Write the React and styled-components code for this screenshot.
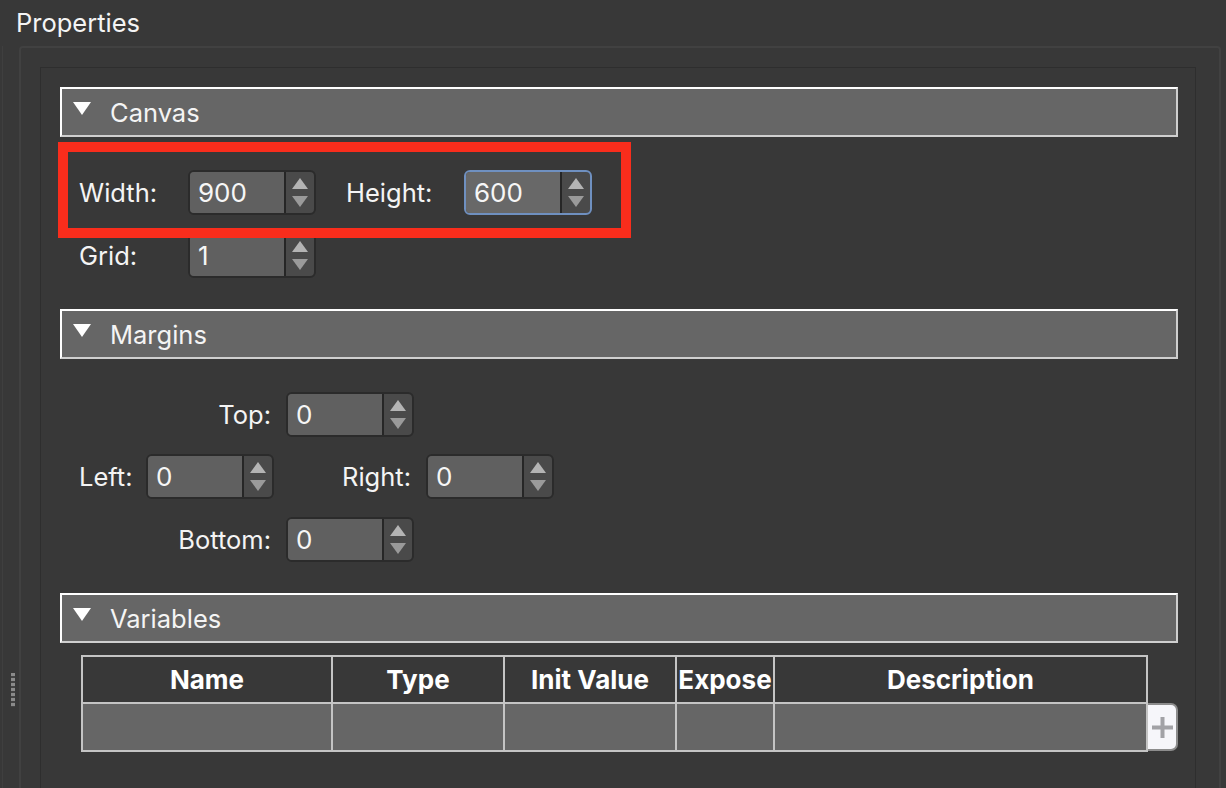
import React from "react";
import styled, { createGlobalStyle } from "styled-components";

const GlobalStyle = createGlobalStyle`
  html, body { margin: 0; padding: 0; height: 788px; overflow: hidden; background: #383838; }
  body { font-family: Inter, "Liberation Sans", sans-serif; color: #fff; }
  * { box-sizing: border-box; }
`;

const Page = styled.div`
  width: 1226px;
  height: 788px;
  overflow: hidden;
  background: #383838;
`;

const Title = styled.div`
  height: 46px;
  padding: 8px 0 0 16px;
  font-size: 25.5px;
  line-height: 30px;
  color: #f4f4f4;
`;

const Body = styled.div`
  display: flex;
  height: 742px;
`;

const Splitter = styled.div`
  width: 19px;
  flex: none;
  margin-left: 2px;
  margin-right: -2px;
  padding: 627px 0 0 8px;
  border-left: 1px solid #3f3f3f;
`;

const Grip = styled.div`
  width: 4px;
  height: 34px;
  background: repeating-linear-gradient(to bottom, #8a8a8a 0 3px, #444 3px 5px);
`;

const OuterBox = styled.div`
  width: 1202px;
  height: 900px;
  padding: 19px 24px 0 19px;
  border: 2px solid #414141;
  border-radius: 4px;
`;

const InnerBox = styled.div`
  width: 1156px;
  height: 860px;
  padding: 19px 17px 0 19px;
  border: 1px solid #2e2e2e;
`;

const SectionBar = styled.div`
  display: flex;
  align-items: center;
  height: 50px;
  padding: 1px 0 0 11px;
  background: #666;
  border: 2px solid #cfcfcf;
  border-top-color: #fff;
  border-left-color: #fff;
  font-size: 25.5px;
  color: #f4f4f4;
  svg { margin-right: 19px; margin-top: -8px; }
`;

const Form = styled.div`
  position: relative;
  display: grid;
  grid-template-columns: ${(p) => p.$columns};
  grid-auto-rows: 44px;
  row-gap: ${(p) => p.$rowGap || "19px"};
  align-items: center;
  margin: 33px 0 32px 19px;
`;

const Label = styled.label`
  grid-column: ${(p) => p.$col};
  justify-self: ${(p) => (p.$right ? "end" : "start")};
  padding-right: ${(p) => (p.$right ? "15px" : "0")};
  font-size: 25.5px;
  color: #f4f4f4;
`;

const Spin = styled.div`
  grid-column: ${(p) => p.$col};
  display: flex;
  height: 45px;
  border: 2px solid ${(p) => (p.$focused ? "#6f90c0" : "#2b2b2b")};
  border-radius: 6px;
  background: #4a4a4a;
  overflow: hidden;
`;

const SpinValue = styled.div`
  width: 96px;
  padding-left: 8px;
  background: ${(p) => (p.$focused ? "#686868" : "#606060")};
  font-size: 26px;
  line-height: 42px;
  color: #f6f6f6;
  border-right: 2px solid #262626;
`;

const SpinArrows = styled.div`
  flex: 1;
  display: flex;
  flex-direction: column;
  align-items: center;
  justify-content: center;
  gap: 5px;
`;

const Highlight = styled.div`
  position: absolute;
  left: -21px;
  top: -28px;
  width: 573px;
  height: 96px;
  border: 10px solid #f92d1c;
  pointer-events: none;
`;

const TableRow = styled.div`
  display: flex;
  align-items: flex-end;
  margin: 12px 0 0 21px;
`;

const Table = styled.table`
  width: 1065px;
  table-layout: fixed;
  border-collapse: collapse;
  th, td { border: 2px solid #c4c4c4; padding: 0; }
  th { height: 47px; font-size: 26px; font-weight: 700; color: #fff; white-space: nowrap; }
  td { height: 48px; background: #666; }
`;

const AddButton = styled.button`
  display: flex;
  align-items: center;
  justify-content: center;
  width: 31px;
  height: 48px;
  margin-bottom: 1px;
  padding: 0;
  background: #f6f6fa;
  border: 2px solid #8c8c8c;
  border-left: none;
  border-radius: 0 7px 7px 0;
  color: #a2a2a6;
`;

const Triangle = () => (
  <svg width="18" height="13" viewBox="0 0 18 13">
    <path d="M0 0H18L9 13Z" fill="#fff" />
  </svg>
);

const Up = () => (
  <svg width="16" height="12" viewBox="0 0 16 12">
    <path d="M8 0L16 11H0Z" fill="#b4b4b4" />
  </svg>
);

const Down = () => (
  <svg width="16" height="12" viewBox="0 0 16 12">
    <path d="M0 1H16L8 12Z" fill="#9a9a9a" />
  </svg>
);

const SpinBox = ({ value, col, focused }) => (
  <Spin $col={col} $focused={focused}>
    <SpinValue $focused={focused}>{value}</SpinValue>
    <SpinArrows>
      <Up />
      <Down />
    </SpinArrows>
  </Spin>
);

const columns = [
  { name: "Name", width: 250 },
  { name: "Type", width: 172 },
  { name: "Init Value", width: 172 },
  { name: "Expose", width: 98 },
  { name: "Description", width: 373 },
];

export default function App() {
  return (
    <Page>
      <GlobalStyle />
      <Title>Properties</Title>
      <Body>
        <Splitter>
          <Grip />
        </Splitter>
        <OuterBox>
          <InnerBox>
            <SectionBar>
              <Triangle />
              Canvas
            </SectionBar>
            <Form $columns="109px 128px 30px 118px 128px">
              <Label $col="1">Width:</Label>
              <SpinBox col="2" value="900" />
              <Label $col="4">Height:</Label>
              <SpinBox col="5" value="600" focused />
              <Label $col="1">Grid:</Label>
              <SpinBox col="2" value="1" />
              <Highlight />
            </Form>

            <SectionBar>
              <Triangle />
              Margins
            </SectionBar>
            <Form $columns="67px 128px 12px 128px 12px 128px" $rowGap="18.5px">
              <Label $col="1 / 4" $right>Top:</Label>
              <SpinBox col="4" value="0" />
              <Label $col="1">Left:</Label>
              <SpinBox col="2" value="0" />
              <Label $col="3 / 6" $right>Right:</Label>
              <SpinBox col="6" value="0" />
              <Label $col="1 / 4" $right>Bottom:</Label>
              <SpinBox col="4" value="0" />
            </Form>

            <SectionBar>
              <Triangle />
              Variables
            </SectionBar>
            <TableRow>
              <Table>
                <colgroup>
                  {columns.map((c) => (
                    <col key={c.name} style={{ width: c.width }} />
                  ))}
                </colgroup>
                <thead>
                  <tr>
                    {columns.map((c) => (
                      <th key={c.name}>{c.name}</th>
                    ))}
                  </tr>
                </thead>
                <tbody>
                  <tr>
                    {columns.map((c) => (
                      <td key={c.name} />
                    ))}
                  </tr>
                </tbody>
              </Table>
              <AddButton aria-label="Add variable">
                <svg width="21" height="21" viewBox="0 0 21 21">
                  <path d="M8.5 0h4v8.5H21v4h-8.5V21h-4v-8.5H0v-4h8.5Z" fill="currentColor" />
                </svg>
              </AddButton>
            </TableRow>
          </InnerBox>
        </OuterBox>
      </Body>
    </Page>
  );
}
